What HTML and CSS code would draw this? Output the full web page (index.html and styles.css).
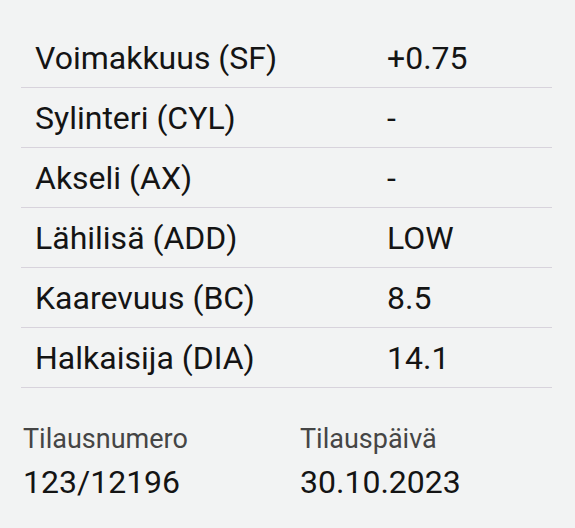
FILE: index.html
```html
<!DOCTYPE html>
<html lang="fi">
<head>
<meta charset="utf-8">
<link rel="stylesheet" href="styles.css">
</head>
<body>
<div class="page">
  <div class="specs">
    <div class="row"><div class="label">Voimakkuus (SF)</div><div class="value">+0.75</div></div>
    <div class="row"><div class="label">Sylinteri (CYL)</div><div class="value">-</div></div>
    <div class="row"><div class="label">Akseli (AX)</div><div class="value">-</div></div>
    <div class="row"><div class="label">Lähilisä (ADD)</div><div class="value">LOW</div></div>
    <div class="row"><div class="label">Kaarevuus (BC)</div><div class="value">8.5</div></div>
    <div class="row"><div class="label">Halkaisija (DIA)</div><div class="value">14.1</div></div>
  </div>
  <div class="order">
    <div class="field">
      <div class="field-label">Tilausnumero</div>
      <div class="field-value">123/12196</div>
    </div>
    <div class="field">
      <div class="field-label">Tilauspäivä</div>
      <div class="field-value">30.10.2023</div>
    </div>
  </div>
</div>
</body>
</html>
```
FILE: styles.css
```css
html, body {
  margin: 0;
  padding: 0;
  background: #f2f3f3;
}
body {
  font-family: Roboto, "Noto Sans", sans-serif;
  color: #141414;
  width: 575px;
  height: 528px;
  overflow: hidden;
}
.page {
  padding: 28px 23px 0 21px;
}
.specs {
  display: flex;
  flex-direction: column;
}
.row {
  display: grid;
  grid-template-columns: 366px 1fr;
  height: 59px;
  align-items: center;
  border-bottom: 1px solid #d8d3dc;
  font-size: 32px;
  line-height: 38px;
}
.label {
  padding-left: 14px;
}
.order {
  display: grid;
  grid-template-columns: 277px 1fr;
  padding: 35px 0 0 2px;
}
.field-label {
  font-size: 27px;
  color: #454545;
  line-height: 32px;
}
.field-value {
  font-size: 32px;
  margin-top: 8px;
  line-height: 38px;
}
```
